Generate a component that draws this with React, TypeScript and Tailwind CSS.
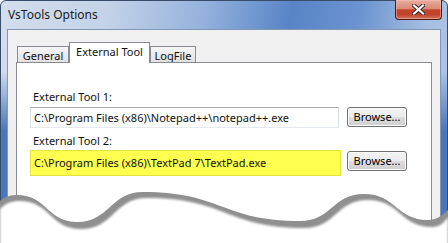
import React from 'react';

const font = { fontFamily: '"Noto Sans", "Open Sans", sans-serif' };

const CloseGlyph: React.FC = () => (
  <svg width="13" height="11" viewBox="0 0 13 11">
    <path d="M2 1.5 L11 9.5 M11 1.5 L2 9.5" stroke="#3a2a2a" strokeWidth="4.2" strokeLinecap="square" />
    <path d="M2 1.5 L11 9.5 M11 1.5 L2 9.5" stroke="#ffffff" strokeWidth="2.2" strokeLinecap="square" />
  </svg>
);

const BrowseButton: React.FC<{ className?: string }> = ({ className = '' }) => (
  <button
    className={`w-[60px] h-[20px] rounded-[3px] border border-[#707070] bg-[linear-gradient(to_bottom,#f2f2f2_0%,#ebebeb_48%,#dddddd_52%,#cfcfcf_100%)] shadow-[inset_0_0_0_1px_#fcfcfc] text-[11px] leading-[18px] text-black ${className}`}
  >
    Browse...
  </button>
);

const Tab: React.FC<{ label: string; width: string; active?: boolean }> = ({ label, width, active }) =>
  active ? (
    <div className={`${width} h-[21px] -mb-px relative z-10 border border-b-0 border-[#898c95] bg-white text-[11px] leading-[17px] text-center text-[#111]`}>
      {label}
    </div>
  ) : (
    <div className={`${width} h-[16px] border border-b-0 border-[#898c95] bg-[linear-gradient(to_bottom,#f6f6f6,#e1e1e1)] text-[11px] leading-[17px] text-center text-[#111]`}>
      {label}
    </div>
  );

export default function App() {
  return (
    <div className="relative w-[448px] h-[243px] bg-white overflow-hidden" style={font}>
      {/* window frame */}
      <div className="h-[238px] flex flex-col rounded-t-[6px] border border-[#384c6a] px-[6px] bg-[linear-gradient(to_bottom,transparent_0px,transparent_70px,#4a76bb_130px),linear-gradient(100deg,#d3deed_0%,#c4d3e8_22%,#94b2dd_42%,#5884c6_60%,#6b93cf_74%,#a5bee2_88%,#b4c9e7_100%)]">
        <div className="h-[28px] flex items-start shrink-0">
          <span className="mt-[6px] ml-px text-[12px] leading-[16px] text-[#1b1b1b]">VsTools Options</span>
          <div className="ml-auto -mt-px -mr-[1px] w-[47px] h-[20px] rounded-b-[4px] border border-[#4a1c16] border-t-0 shadow-[inset_0_0_0_1px_rgba(255,200,190,0.45)] bg-[linear-gradient(to_bottom,#e9ad9f_0%,#d98a76_45%,#c4452c_52%,#c2402a_75%,#d2755e_100%)] flex items-center justify-center">
            <CloseGlyph />
          </div>
        </div>

        {/* client area */}
        <div className="flex-1 flex flex-col border border-[#8396b3] bg-[#f0f0f0] pt-[12px] px-[8px]">
          <div className="flex items-end h-[20px] pl-px">
            <Tab label="General" width="w-[52px]" />
            <Tab label="External Tool" width="w-[81px]" active />
            <Tab label="LogFile" width="w-[46px]" />
          </div>

          <div className="flex-1 border border-[#898c95] bg-white pt-[26px] pl-[13px] text-[11px] text-[#111]">
            <div className="pl-[3px] leading-[15px]">External Tool 1:</div>
            <div className="flex items-start gap-[8px] mt-[3px]">
              <div className="w-[309px] h-[21px] border border-[#dbdfe6] border-t-[#abadb3] border-b-[#e3e9ef] pl-[3px] leading-[19px] whitespace-nowrap">
                C:\Program Files (x86)\Notepad++\notepad++.exe
              </div>
              <BrowseButton />
            </div>

            <div className="pl-[3px] leading-[15px] mt-[5px]">External Tool 2:</div>
            <div className="flex items-start gap-[6px] mt-[2px]">
              <div className="w-[311px] h-[26px] border border-[#e2e23a] bg-[#ffff50] pl-[3px] pt-[2px] leading-[19px] whitespace-nowrap">
                C:\Program Files (x86)\TextPad 7\TextPad.exe
              </div>
              <BrowseButton className="mt-px" />
            </div>
          </div>
        </div>
      </div>

      {/* torn bottom edge */}
      <svg className="absolute left-0 bottom-0" width="448" height="60" viewBox="0 183 448 60">
        <defs>
          <filter id="soft" x="-5%" y="-20%" width="110%" height="140%">
            <feGaussianBlur stdDeviation="0.9" />
          </filter>
        </defs>
        <path
          d="M0 201 C6 196 11 195 17 195 C47 195 47 222 77 222 C110 222 110 192 143 192 C222 192 222 221 300 221 C332 221 332 194 364 194 C396 194 396 220 428 220 C438 220 443 214 448 210 L448 243 L0 243 Z"
          fill="#8f8f8f"
        />
        <path
          filter="url(#soft)"
          d="M0 209 C6 203 11 201 20 201 C50 201 50 229 81 229 C114 229 114 198 147 198 C226 198 226 228 304 228 C336 228 336 200 368 200 C400 200 400 227 432 227 C441 227 445 221 448 217 L448 250 L0 250 Z"
          fill="#ffffff"
        />
      </svg>
    </div>
  );
}
